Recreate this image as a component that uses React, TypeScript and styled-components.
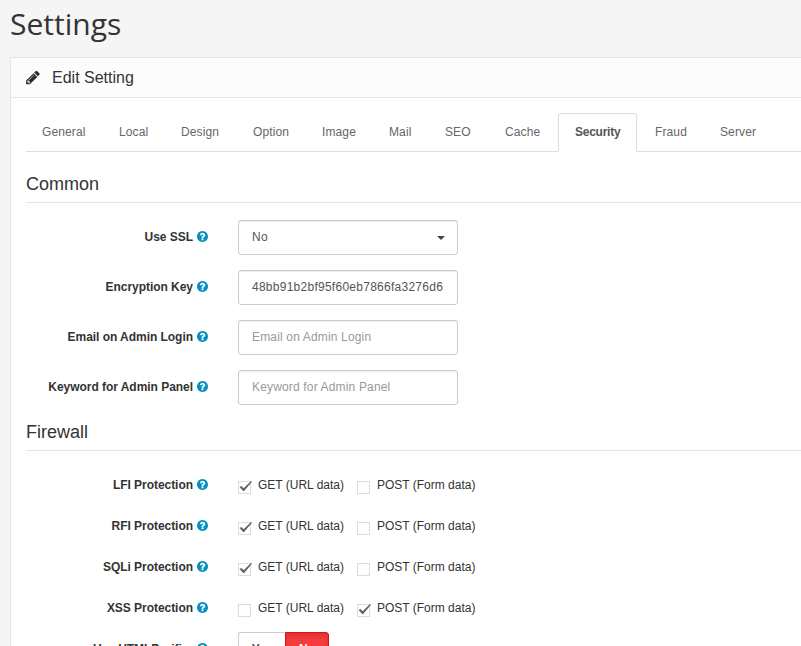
import React from 'react';
import styled, { createGlobalStyle, css } from 'styled-components';

const GlobalStyle = createGlobalStyle`
  * { box-sizing: border-box; }
  html, body { margin: 0; height: 100%; overflow: hidden; }
  body {
    background: #f5f5f5;
    color: #333;
    font: 12px/18px "Liberation Sans", Arial, sans-serif;
  }
`;

const Page = styled.main`
  height: 646px;
  overflow: hidden;
  padding-left: 10px;
  display: flex;
  flex-direction: column;
`;

const PageTitle = styled.h1`
  margin: 0;
  height: 57px;
  flex: none;
  padding-top: 7px;
  font: 400 30px/34px "Open Sans", sans-serif;
  color: #333;
`;

const Panel = styled.section`
  flex: none;
  border: 1px solid #e4e4e4;
  border-right: 0;
  background: #fff;
`;

const PanelHeading = styled.header`
  height: 40px;
  padding-left: 14px;
  display: flex;
  align-items: center;
  gap: 11px;
  background: #fcfcfc;
  border-bottom: 1px solid #e4e4e4;
`;

const PanelTitle = styled.h2`
  margin: 0;
  font-size: 16px;
  font-weight: 400;
`;

const PanelBody = styled.div`
  padding: 15px 0 0 15px;
`;

const Tabs = styled.nav`
  height: 39px;
  display: flex;
  border-bottom: 1px solid #ddd;
`;

const Tab = styled.a<{ $width: number; $active?: boolean }>`
  width: ${(p) => p.$width}px;
  height: 39px;
  flex: none;
  padding: 9px 0 0 15px;
  color: #666;
  white-space: nowrap;
  letter-spacing: 0.12px;
  border: 1px solid transparent;
  border-radius: 3px 3px 0 0;
  ${(p) =>
    p.$active &&
    css`
      padding-left: 16px;
      color: #555;
      font-weight: 700;
      letter-spacing: -0.25px;
      background: #fff;
      border-color: #ddd #ddd #fff;
      margin-right: 2px;
    `}
`;

const Legend = styled.h3<{ $first?: boolean }>`
  margin: 0 0 17px;
  height: ${(p) => (p.$first ? 51 : 31)}px;
  padding-top: ${(p) => (p.$first ? 21 : 1)}px;
  font-size: 18px;
  font-weight: 400;
  line-height: 22px;
  border-bottom: 1px solid #e5e5e5;
`;

const Field = styled.div`
  display: grid;
  grid-template-columns: 182px 1fr;
  column-gap: 30px;
  height: 35px;
  margin-bottom: 15px;
`;

const CheckField = styled(Field)`
  height: 26px;
`;

const Label = styled.div`
  height: 34px;
  padding-top: 8px;
  display: flex;
  justify-content: flex-end;
  gap: 4px;
  font-weight: 700;
  letter-spacing: -0.04px;
  white-space: nowrap;
  svg { margin-top: 3px; }
`;

const Control = styled.div`
  width: 220px;
  height: 35px;
  padding: 0 13px;
  display: flex;
  align-items: center;
  justify-content: space-between;
  border: 1px solid #ccc;
  border-radius: 3px;
  box-shadow: inset 0 1px 1px rgba(0, 0, 0, 0.075);
  background: #fff;
  color: #555;
`;

const Value = styled.span<{ $muted?: boolean }>`
  overflow: hidden;
  white-space: nowrap;
  margin-top: -2px;
  letter-spacing: ${(p) => (p.$muted ? 0.16 : 0.26)}px;
  color: ${(p) => (p.$muted ? '#999' : '#555')};
`;

const Caret = styled.i`
  margin-right: -1px;
  border: 4px solid transparent;
  border-top-color: #444;
  border-bottom: 0;
`;

const Options = styled.div`
  display: flex;
  padding-top: 8px;
  white-space: nowrap;
`;

const Option = styled.label`
  width: 119px;
  display: flex;
  gap: 7px;
`;

const Box = styled.span`
  width: 13px;
  height: 13px;
  flex: none;
  margin-top: 5px;
  border: 1px solid #dcdcdc;
  background: #fff;
  svg { display: block; overflow: visible; }
`;

const ButtonGroup = styled.div`
  display: flex;
`;

const Toggle = styled.button<{ $on?: boolean }>`
  width: ${(p) => (p.$on ? 44 : 47)}px;
  height: 35px;
  padding: 0 0 1px;
  font: 700 12px/18px "Liberation Sans", Arial, sans-serif;
  color: ${(p) => (p.$on ? '#fff' : '#555')};
  background: ${(p) => (p.$on ? '#f53b3b' : '#fff')};
  border: 1px solid ${(p) => (p.$on ? '#e40d10' : '#ccc')};
  border-right-width: ${(p) => (p.$on ? 1 : 0)}px;
  border-radius: ${(p) => (p.$on ? '0 3px 3px 0' : '3px 0 0 3px')};
  box-shadow: ${(p) => (p.$on ? 'inset 0 3px 5px rgba(0, 0, 0, 0.125)' : 'none')};
`;

const Pencil = () => (
  <svg width="16" height="16" viewBox="0 60 1792 1792" fill="#2b2b2b">
    <path d="M491 1536l91-91-235-235-91 91v107h128v128h107zM1014 608q0-22-22-22-10 0-17 7l-542 542q-7 7-7 17 0 22 22 22 10 0 17-7l542-542q7-7 7-17zM960 416l416 416-832 832h-416v-416zM1643 512q0 53-37 90l-166 166-416-416 166-165q36-38 90-38 53 0 91 38l235 234q37 39 37 91z" />
  </svg>
);

const Help = () => (
  <svg width="11" height="11" viewBox="128 128 1536 1536" fill="#0590c0">
    <path d="M1024 1376v-192q0-14-9-23t-23-9h-192q-14 0-23 9t-9 23v192q0 14 9 23t23 9h192q14 0 23-9t9-23zM1280 704q0-88-55.5-163t-138.5-116-170-41q-243 0-371 213-15 24 8 42l132 100q7 6 19 6 16 0 25-12 53-68 86-92 34-24 86-24 48 0 85.5 26t37.5 59q0 38-20 61t-68 45q-63 28-115.5 86.5t-52.5 125.5v36q0 14 9 23t23 9h192q14 0 23-9t9-23q0-19 21.5-49.5t54.5-49.5q32-18 49-28.5t46-35 44.5-48 28-60.5 12.5-81zM1664 896q0 209-103 385.5t-279.5 279.5-385.5 103-385.5-103-279.5-279.5-103-385.5 103-385.5 279.5-279.5 385.5-103 385.5 103 279.5 279.5 103 385.5z" />
  </svg>
);

const CheckMark = () => (
  <svg width="13" height="11" viewBox="0 0 13 11">
    <path d="M0.6 4.9 L2.4 3.9 L4.7 6.2 L12 -0.9 L13 -0.3 L5.1 9 L4.1 9 Z" fill="#626262" />
  </svg>
);

const tabs: [string, number][] = [
  ['General', 77], ['Local', 62], ['Design', 72], ['Option', 69], ['Image', 67],
  ['Mail', 56], ['SEO', 60], ['Cache', 69], ['Security', 79], ['Fraud', 65], ['Server', 72],
];

const inputs: [string, string, boolean][] = [
  ['Encryption Key', '48bb91b2bf95f60eb7866fa3276d6', false],
  ['Email on Admin Login', 'Email on Admin Login', true],
  ['Keyword for Admin Panel', 'Keyword for Admin Panel', true],
];

const protections: [string, boolean, boolean][] = [
  ['LFI Protection', true, false],
  ['RFI Protection', true, false],
  ['SQLi Protection', true, false],
  ['XSS Protection', false, true],
];

export default function App() {
  return (
    <Page>
      <GlobalStyle />
      <PageTitle>Settings</PageTitle>
      <Panel>
        <PanelHeading>
          <Pencil />
          <PanelTitle>Edit Setting</PanelTitle>
        </PanelHeading>
        <PanelBody>
          <Tabs>
            {tabs.map(([name, width]) => (
              <Tab key={name} $width={width} $active={name === 'Security'}>{name}</Tab>
            ))}
          </Tabs>
          <Legend $first>Common</Legend>
          <Field>
            <Label>Use SSL<Help /></Label>
            <Control><Value>No</Value><Caret /></Control>
          </Field>
          {inputs.map(([label, value, muted]) => (
            <Field key={label}>
              <Label>{label}<Help /></Label>
              <Control><Value $muted={muted}>{value}</Value></Control>
            </Field>
          ))}
          <Legend>Firewall</Legend>
          {protections.map(([label, get, post]) => (
            <CheckField key={label}>
              <Label>{label}<Help /></Label>
              <Options>
                <Option><Box>{get && <CheckMark />}</Box>GET (URL data)</Option>
                <Option><Box>{post && <CheckMark />}</Box>POST (Form data)</Option>
              </Options>
            </CheckField>
          ))}
          <Field>
            <Label>Use HTMLPurifier<Help /></Label>
            <ButtonGroup>
              <Toggle>Yes</Toggle>
              <Toggle $on>No</Toggle>
            </ButtonGroup>
          </Field>
        </PanelBody>
      </Panel>
    </Page>
  );
}
